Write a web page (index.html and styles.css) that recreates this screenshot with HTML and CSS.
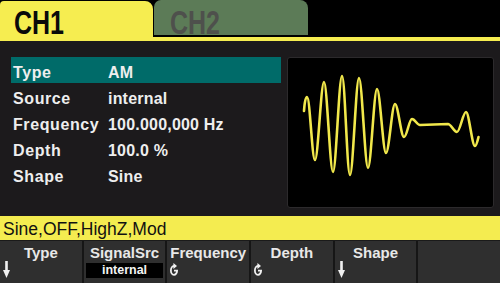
FILE: index.html
```html
<!DOCTYPE html>
<html>
<head>
<meta charset="utf-8">
<link rel="stylesheet" href="styles.css">
</head>
<body>
<div class="screen">
  <div class="tabs">
    <div class="tab tab-active"><span class="tab-label">CH1</span></div>
    <div class="tab tab-idle"><span class="tab-label">CH2</span></div>
  </div>
  <div class="rule"></div>
  <div class="main">
    <div class="params">
      <div class="row row-sel"><span class="pname">Type</span><span class="pval">AM</span></div>
      <div class="row"><span class="pname">Source</span><span class="pval">internal</span></div>
      <div class="row"><span class="pname">Frequency</span><span class="pval">100.000,000 Hz</span></div>
      <div class="row"><span class="pname">Depth</span><span class="pval">100.0 %</span></div>
      <div class="row"><span class="pname">Shape</span><span class="pval">Sine</span></div>
    </div>
    <div class="wavebox">
      <svg class="wave" width="205" height="149" viewBox="288 58 205 149">
        <path d="M304 111 C304.5 103 305.5 97 307 97 C310 97 312 160 315 160 C318 160 321 82 324 82 C327 82 330 172 333 172 C336 172 339 76 342 76 C345 76 347 175 350 175 C353 175 356 78 359 78 C362 78 365 168 368 168 C371 168 374 89 377 89 C380 89 383 153 386 153 C389 153 392 104 395 104 C398 104 401 137 404 137 C407 137 409 119 412 119 C415 119 417 125 420 125 L448 124 C451 124 454 132 457 132 C460 132 463 112 466 112 C469 112 472 146 475 146 C476.5 146 477.5 141 478.5 137" fill="none" stroke="#f1e84b" stroke-width="2.6" stroke-linejoin="round" stroke-linecap="round"/>
      </svg>
    </div>
  </div>
  <div class="status">Sine,OFF,HighZ,Mod</div>
  <div class="keys">
    <div class="key">
      <div class="klabel">Type</div>
      <div class="kfoot">
        <svg class="ico-down" width="7" height="17" viewBox="0 0 7 17"><rect x="2.2" y="0" width="2.6" height="10" fill="#f0f0f0"/><polygon points="0,9 7,9 3.5,17" fill="#f0f0f0"/></svg>
      </div>
    </div>
    <div class="key">
      <div class="klabel">SignalSrc</div>
      <div class="kfoot">
        <div class="kvalue">internal</div>
      </div>
    </div>
    <div class="key">
      <div class="klabel">Frequency</div>
      <div class="kfoot">
        <svg class="ico-rot" width="8" height="13" viewBox="0 0 8 13"><path d="M4 3 A3.1 4.4 0 1 0 7.1 7.6 H4" fill="none" stroke="#f0f0f0" stroke-width="1.8"/><polygon points="3.4,0 7,3 3.4,6" fill="#f0f0f0"/></svg>
      </div>
    </div>
    <div class="key">
      <div class="klabel">Depth</div>
      <div class="kfoot">
        <svg class="ico-rot" width="8" height="13" viewBox="0 0 8 13"><path d="M4 3 A3.1 4.4 0 1 0 7.1 7.6 H4" fill="none" stroke="#f0f0f0" stroke-width="1.8"/><polygon points="3.4,0 7,3 3.4,6" fill="#f0f0f0"/></svg>
      </div>
    </div>
    <div class="key">
      <div class="klabel">Shape</div>
      <div class="kfoot">
        <svg class="ico-down" width="7" height="17" viewBox="0 0 7 17"><rect x="2.2" y="0" width="2.6" height="10" fill="#f0f0f0"/><polygon points="0,9 7,9 3.5,17" fill="#f0f0f0"/></svg>
      </div>
    </div>
    <div class="key">
      <div class="klabel"></div>
      <div class="kfoot"></div>
    </div>
  </div>
</div>
</body>
</html>
```
FILE: styles.css
```css
* { box-sizing: border-box; }
html, body { margin: 0; padding: 0; }
body {
  width: 500px;
  height: 283px;
  overflow: hidden;
  background: #1c1a1c;
  font-family: "Liberation Sans", Arial, sans-serif;
}
.screen {
  width: 500px;
  height: 283px;
  display: flex;
  flex-direction: column;
}
.tabs {
  height: 37px;
  background: #000;
  display: flex;
  align-items: flex-start;
}
.tab {
  font-weight: bold;
  font-size: 25px;
  line-height: 25px;
}
.tab-label {
  display: inline-block;
  transform: scaleY(1.3);
  transform-origin: 0 0;
}
.tab-active {
  margin-top: 1px;
  width: 153px;
  height: 36px;
  background: #f6ed50;
  color: #0a0a0a;
  border-radius: 4px 8px 0 0;
  padding: 6px 0 0 14px;
}
.tab-idle {
  margin-left: 1px;
  width: 154px;
  height: 35px;
  background: #5c7b57;
  color: #4e504c;
  border-radius: 7px 8px 0 0;
  padding: 7px 0 0 16px;
}
.rule {
  height: 4px;
  background: #f6ed50;
}
.main {
  height: 175px;
  display: flex;
  padding: 16px 6px 8px 11px;
  gap: 6px;
}
.params {
  width: 270px;
  color: #eeeeee;
  font-size: 16px;
  font-weight: bold;
}
.row {
  height: 26px;
  padding: 5px 0 0 2px;
  line-height: 21px;
  display: flex;
  white-space: nowrap;
}
.row-sel { background: #006b69; }
.pname {
  width: 95px;
  letter-spacing: 0.6px;
}
.pval { letter-spacing: 0.2px; }
.wavebox {
  width: 207px;
  height: 151px;
  background: #000;
  border: 1px solid #2c2a2c;
  border-radius: 3px;
}
.wave { display: block; }
.status {
  height: 25px;
  background: #f4ec50;
  border-bottom: 1px solid #1a1a1a;
  color: #111;
  font-size: 17.5px;
  line-height: 21px;
  padding: 3px 0 0 3px;
  white-space: nowrap;
}
.keys {
  flex: 1;
  display: grid;
  grid-template-columns: repeat(6, 1fr);
  gap: 2px;
  background: #161616;
}
.key {
  background: #2f2f2f;
  padding-top: 4px;
  display: flex;
  flex-direction: column;
}
.klabel {
  height: 15px;
  line-height: 15px;
  text-align: center;
  color: #e8e8e8;
  font-size: 15px;
  font-weight: bold;
  white-space: nowrap;
}
.kfoot {
  height: 20px;
  display: flex;
  align-items: flex-start;
}
.ico-down { display: block; margin: 1px 0 0 3px; }
.ico-rot { display: block; margin: 3px 0 0 3px; }
.kvalue {
  flex: 1;
  margin: 3px 2px 0 2px;
  height: 15px;
  background: #000;
  color: #f4f4f4;
  font-size: 12.5px;
  font-weight: bold;
  line-height: 15px;
  text-align: center;
}
```
